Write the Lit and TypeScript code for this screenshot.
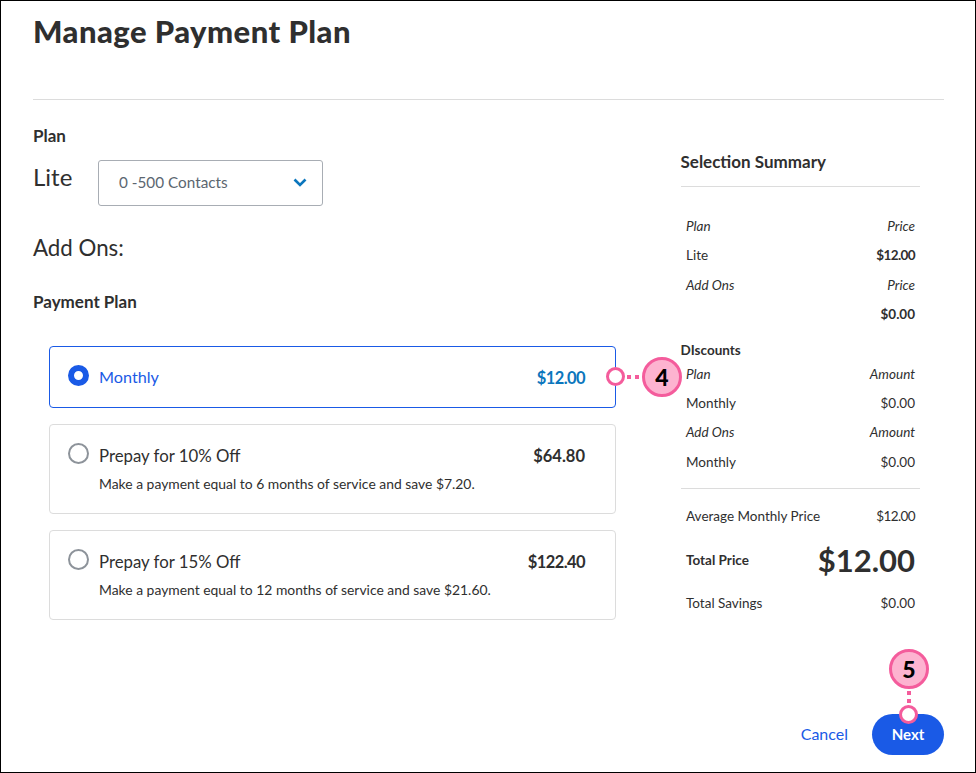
import { LitElement, html, css } from "lit";
import { customElement } from "lit/decorators.js";

const plans = [
  { name: "Monthly", price: "$12.00", desc: "", selected: true, tight: true },
  { name: "Prepay for 10% Off", price: "$64.80", desc: "Make a payment equal to 6 months of service and save $7.20.", selected: false, tight: false },
  { name: "Prepay for 15% Off", price: "$122.40", desc: "Make a payment equal to 12 months of service and save $21.60.", selected: false, tight: true },
];

@customElement("app-root")
export class AppRoot extends LitElement {
  static styles = css`
    :host {
      display: block; position: relative; box-sizing: border-box; width: 976px; height: 773px;
      border: 1px solid #000; background: #fff; color: #2f2f2f;
      font-family: Lato, "Noto Sans", sans-serif; overflow: hidden;
    }
    .modal { padding: 0 31px 0 32px; display: flex; flex-direction: column; height: 100%; box-sizing: border-box; }
    h1 { margin: 0; height: 99px; box-sizing: border-box; padding-top: 11px; font-size: 31px; line-height: 38px; font-weight: 900; letter-spacing: 0.45px; border-bottom: 1px solid #dcdcdc; }
    .body { display: flex; flex: 1; }
    .left { width: 583px; padding-right: 64px; box-sizing: border-box; }
    .label { font-weight: 700; font-size: 17px; line-height: 20px; }
    .plan-label { margin-top: 26px; }
    .plan-row { display: flex; align-items: flex-start; margin-top: 14px; }
    .plan-name { font-size: 24px; line-height: 30px; width: 65px; margin-top: 2px; }
    .select { width: 225px; height: 46px; box-sizing: border-box; border: 1px solid #a8adb4; border-radius: 3px; display: flex; align-items: center; justify-content: space-between; padding: 0 15px 2px 20px; font-size: 15.3px; color: #5b6670; }
    .addons { font-size: 22.3px; line-height: 30px; margin-top: 27px; }
    .pay-label { margin-top: 29px; }
    .options { display: flex; flex-direction: column; gap: 16px; margin: 34px 0 0 16px; width: 567px; }
    .opt { box-sizing: border-box; height: 90px; border: 1px solid #dcdcdc; border-radius: 4px; padding: 18px 30px 0 18px; }
    .opt.sel { height: 62px; border-color: #1a5ae6; }
    .top { display: flex; align-items: center; height: 21px; }
    .radio { width: 21px; height: 21px; box-sizing: border-box; border-radius: 50%; border: 2px solid #8d939a; margin-right: 10px; flex: none; }
    .sel .radio { border: 6px solid #1a5ae6; }
    .name { font-size: 16.8px; flex: 1; margin-top: 4px; }
    .sel .name { color: #1a5ae6; font-size: 16.2px; margin-top: 2px; }
    .price { font-size: 16.5px; font-weight: 700; margin-top: 4px; }
    .price.tight { letter-spacing: -0.6px; }
    .sel .price { color: #0b76bd; }
    .desc { font-size: 13.9px; line-height: 20px; margin: 10px 0 0 31px; }
    .right { width: 239.500px; margin-left: 64.500px; }
    .sum-title { font-weight: 700; font-size: 17px; line-height: 20px; margin-top: 52px; padding-bottom: 14px; border-bottom: 1px solid #dcdcdc; }
    .rows { padding: 0 5px 0 5.500px; }
    .row { display: flex; justify-content: space-between; align-items: center; height: 29.300px; font-size: 13.5px; }
    .it { font-style: italic; }
    .b { font-weight: 700; }
    .tight { letter-spacing: -0.6px; }
    .first { margin-top: 24.400px; }
    .disc { font-weight: 700; font-size: 13.5px; line-height: 18px; margin-top: 12.400px; }
    .sep { border-top: 1px solid #dcdcdc; margin: 12px 0 12.400px; }
    .total { height: 57.800px; }
    .big { font-size: 31px; font-weight: 700; }
    .foot { position: absolute; right: 31px; bottom: 17px; display: flex; align-items: center; gap: 24px; }
    .cancel { color: #1a5ae6; font-size: 16px; padding-bottom: 2px; }
    .next { width: 72px; height: 41px; padding-bottom: 2px; box-sizing: border-box; border-radius: 21px; background: #1a5ae6; color: #fff; font-size: 15px; font-weight: 700; display: flex; align-items: center; justify-content: center; }
    .call { position: absolute; width: 40px; height: 40px; box-sizing: border-box; border: 3px solid #f45c9c; border-radius: 50%; background: #fdb3d0; color: #000; display: flex; align-items: center; justify-content: center; font-size: 23px; font-weight: 900; }
    .dot { position: absolute; width: 13px; height: 13px; border: 3px solid #f45c9c; border-radius: 50%; background: #fff; }
    .dash-h { position: absolute; height: 4px; width: 12px; background: repeating-linear-gradient(90deg, #f45c9c 0 4px, transparent 4px 8px); }
    .dash-v { position: absolute; width: 4px; height: 12px; background: repeating-linear-gradient(180deg, #f45c9c 0 4px, transparent 4px 8px); }
    .c4 { left: 641px; top: 356px; }
    .d4 { left: 605px; top: 366px; }
    .dh4 { left: 626px; top: 374px; }
    .c5 { left: 888px; top: 648px; }
    .d5 { left: 898px; top: 704px; }
    .dv5 { left: 906px; top: 690px; }
  `;

  render() {
    return html`
      <div class="modal">
        <h1>Manage Payment Plan</h1>
        <div class="body">
          <div class="left">
            <div class="label plan-label">Plan</div>
            <div class="plan-row">
              <div class="plan-name">Lite</div>
              <div class="select">
                <span>0 -500 Contacts</span>
                <svg width="14" height="9" viewBox="0 0 14 9"><path d="M1.5 1.5 7 7l5.500-5.500" fill="none" stroke="#0b76bd" stroke-width="2.600"/></svg>
              </div>
            </div>
            <div class="addons">Add Ons:</div>
            <div class="label pay-label">Payment Plan</div>
            <div class="options">
              ${plans.map(p => html`
                <div class="opt ${p.selected ? "sel" : ""}">
                  <div class="top">
                    <div class="radio"></div>
                    <div class="name">${p.name}</div>
                    <div class="price ${p.tight ? "tight" : ""}">${p.price}</div>
                  </div>
                  ${p.desc ? html`<div class="desc">${p.desc}</div>` : ""}
                </div>`)}
            </div>
          </div>
          <div class="right">
            <div class="sum-title">Selection Summary</div>
            <div class="rows">
              <div class="row it first"><span>Plan</span><span>Price</span></div>
              <div class="row"><span>Lite</span><span class="b tight">$12.00</span></div>
              <div class="row it"><span>Add Ons</span><span>Price</span></div>
              <div class="row"><span></span><span class="b">$0.00</span></div>
            </div>
            <div class="disc">DIscounts</div>
            <div class="rows">
              <div class="row it"><span>Plan</span><span>Amount</span></div>
              <div class="row"><span>Monthly</span><span>$0.00</span></div>
              <div class="row it"><span>Add Ons</span><span>Amount</span></div>
              <div class="row"><span>Monthly</span><span>$0.00</span></div>
            </div>
            <div class="sep"></div>
            <div class="rows">
              <div class="row"><span>Average Monthly Price</span><span class="tight">$12.00</span></div>
              <div class="row total"><span class="b">Total Price</span><span class="big">$12.00</span></div>
              <div class="row"><span>Total Savings</span><span>$0.00</span></div>
            </div>
          </div>
        </div>
        <div class="foot">
          <span class="cancel">Cancel</span>
          <div class="next">Next</div>
        </div>
      </div>
      <div class="dot d4"></div>
      <div class="dash-h dh4"></div>
      <div class="call c4">4</div>
      <div class="dot d5"></div>
      <div class="dash-v dv5"></div>
      <div class="call c5">5</div>
    `;
  }
}
